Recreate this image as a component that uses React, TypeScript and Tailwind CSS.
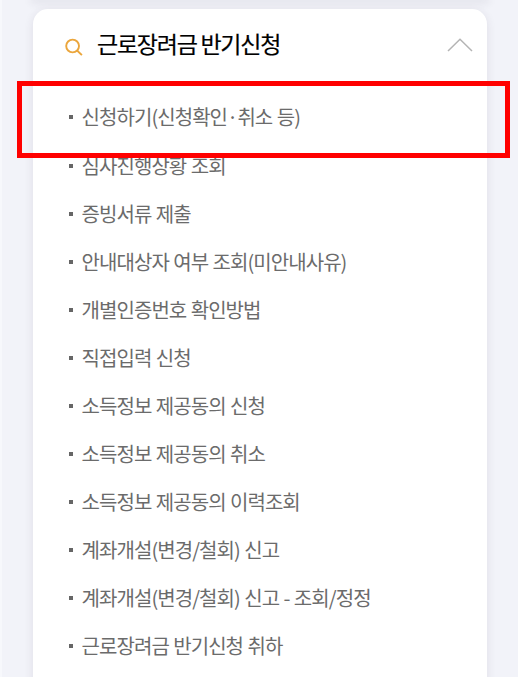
import { useState } from 'react'
import { twMerge } from 'tailwind-merge'

const MENU = [
  { label: '신청하기(신청확인·취소 등)', highlighted: true },
  { label: '심사진행상황 조회' },
  { label: '증빙서류 제출' },
  { label: '안내대상자 여부 조회(미안내사유)' },
  { label: '개별인증번호 확인방법' },
  { label: '직접입력 신청' },
  { label: '소득정보 제공동의 신청' },
  { label: '소득정보 제공동의 취소' },
  { label: '소득정보 제공동의 이력조회' },
  { label: '계좌개설(변경/철회) 신고' },
  { label: '계좌개설(변경/철회) 신고 - 조회/정정' },
  { label: '근로장려금 반기신청 취하' },
]

function SearchIcon() {
  return (
    <svg className="mt-[3px] -ml-px h-[19px] w-[19px]" viewBox="0 0 19 19" fill="none" stroke="#eba63c" strokeWidth="1.9">
      <circle cx="8.6" cy="8" r="6.4" />
      <path d="M13.1 12.5 17.9 17.1" />
    </svg>
  )
}

function Chevron({ open }: { open: boolean }) {
  return (
    <svg
      className={twMerge('h-[14px] w-[26px]', !open && 'rotate-180')}
      viewBox="0 0 26 14"
      fill="none"
      stroke="#b4b4b4"
      strokeWidth="1.5"
    >
      <path d="M1 13 13 1.2 25 13" />
    </svg>
  )
}

function MenuItem({ label, highlighted }: { label: string; highlighted?: boolean }) {
  return (
    <li className="relative flex h-12 shrink-0 items-center pl-9 first:mb-px">
      <span className="h-1 w-1 bg-[#666]" />
      <a
        href="#"
        className="ml-[8.5px] text-[20px] leading-none font-normal tracking-[-0.93px] whitespace-nowrap text-[#6b6b6b] [word-spacing:0.8px]"
      >
        {label}
      </a>
      {/* the frame reaches past both sides of the card and over the next row */}
      {highlighted && (
        <span className="absolute top-[-12px] left-[-16px] z-10 h-[77px] w-[493px] border-[5px] border-[#ff0000]" />
      )}
    </li>
  )
}

export default function App() {
  const [open, setOpen] = useState(true)

  return (
    <div className="flex h-[677px] w-[522px] overflow-hidden bg-white font-['Noto_Sans_CJK_KR','Noto_Sans',sans-serif]">
      <div className="flex w-[518px] flex-col border-l-2 border-[#f7f8fc] bg-[#f2f3f9] pl-[31px]">
        <div className="h-2 w-[454px] shrink-0 overflow-visible">
          <div className="h-0 rounded-b-2xl shadow-[0_0_8px_2px_rgba(60,50,70,0.14)]" />
        </div>
        <section className="mt-px flex h-[720px] w-[454px] shrink-0 flex-col rounded-t-[15px] bg-white shadow-[0_2px_10px_rgba(60,50,70,0.11)]">
          <button type="button" onClick={() => setOpen(!open)} className="flex h-[73px] shrink-0 items-center pr-[14px] pl-8">
            <SearchIcon />
            <h2 className="mb-1 ml-[14px] text-[23px] leading-none font-normal tracking-[-1.25px] text-black [-webkit-text-stroke:0.2px_#000]">
              근로장려금 반기신청
            </h2>
            <span className="mb-[2px] ml-auto">
              <Chevron open={open} />
            </span>
          </button>
          {open && (
            <ul className="mt-[11px] flex flex-col">
              {MENU.map((item) => (
                <MenuItem key={item.label} {...item} />
              ))}
            </ul>
          )}
        </section>
      </div>
    </div>
  )
}
